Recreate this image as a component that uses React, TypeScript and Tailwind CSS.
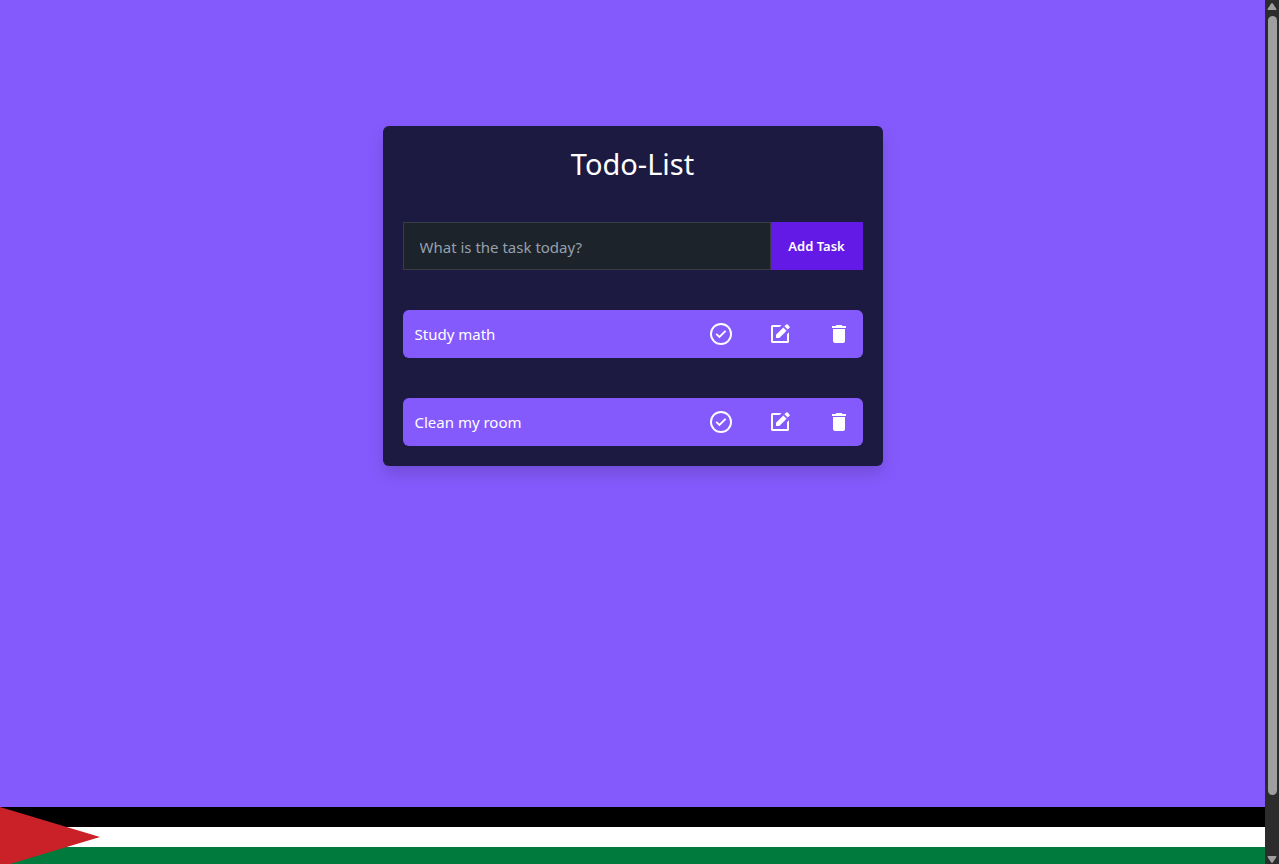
import { useState } from "react";
import type { FormEvent } from "react";
import { MdDelete } from "react-icons/md";

type Task = { id: number; title: string; done: boolean };

const initialTasks: Task[] = [
  { id: 1, title: "Study math", done: false },
  { id: 2, title: "Clean my room", done: false },
];

function CheckIcon() {
  return (
    <svg width="24" height="24" viewBox="0 0 24 24" fill="none" stroke="currentColor" strokeWidth="1.9" aria-hidden="true">
      <circle cx="12" cy="12" r="10.05" />
      <path d="M7.2 11.9L10.4 15L16.6 8.8" />
    </svg>
  );
}

function EditIcon() {
  return (
    <svg width="24" height="24" viewBox="0 0 24 24" fill="currentColor" aria-hidden="true">
      <path d="M13.6 3L11.6 5H5V19H19V12.3L21 10.3V19.5Q21 21 19.5 21H4.5Q3 21 3 19.5V4.5Q3 3 4.5 3Z" />
      <path d="M8 12.7L15.3 5.4L18.6 8.7L11.3 16H8Z" />
      <path d="M16.4 4.3L18.2 2.5Q18.9 1.8 19.6 2.5L21.5 4.4Q22.2 5.1 21.5 5.8L19.7 7.6Z" />
    </svg>
  );
}

function TaskRow({ task, onToggle, onEdit, onDelete }: { task: Task; onToggle: () => void; onEdit: () => void; onDelete: () => void }) {
  return (
    <li className="flex h-12 items-center justify-between rounded-md bg-[#855afd] px-3">
      <span className={task.done ? "line-through" : ""}>{task.title}</span>
      <div className="flex w-[142px] shrink-0 justify-between">
        <button type="button" aria-label="Complete task" onClick={onToggle}>
          <CheckIcon />
        </button>
        <button type="button" aria-label="Edit task" onClick={onEdit}>
          <EditIcon />
        </button>
        <button type="button" aria-label="Delete task" onClick={onDelete}>
          <MdDelete size={24} />
        </button>
      </div>
    </li>
  );
}

function Scrollbar() {
  return (
    <div aria-hidden="true" className="flex w-3.5 shrink-0 flex-col items-center bg-[#2c2c2c] pt-[3px] pb-px">
      <svg width="10" height="8" viewBox="0 0 10 8" fill="#9f9f9f">
        <path d="M4 .7Q5-.6 6 .7L9.4 6Q9.8 7 8.8 7H1.2Q.2 7 .6 6Z" />
      </svg>
      <div className="mt-[5px] mb-[60px] w-[9px] flex-1 rounded-full bg-[#9f9f9f]" />
      <svg width="10" height="8" viewBox="0 0 10 8" fill="#9f9f9f">
        <path d="M4 7.3Q5 8.6 6 7.3L9.4 2Q9.8 1 8.8 1H1.2Q.2 1 .6 2Z" />
      </svg>
    </div>
  );
}

function FlagFooter() {
  return (
    <footer className="h-[57px] shrink-0 overflow-hidden">
      <div className="relative">
        <div className="h-5 bg-black" />
        <div className="h-5 bg-white" />
        <div className="h-5 bg-[#007a3d]" />
        <svg className="absolute top-0 left-0" width="100" height="60" viewBox="0 0 100 60" aria-hidden="true">
          <path d="M0 0L100 30L0 60Z" fill="#ca2027" />
        </svg>
      </div>
    </footer>
  );
}

export default function App() {
  const [tasks, setTasks] = useState<Task[]>(initialTasks);
  const [draft, setDraft] = useState("");

  const addTask = (event: FormEvent) => {
    event.preventDefault();
    if (!draft.trim()) return;
    setTasks([...tasks, { id: Date.now(), title: draft.trim(), done: false }]);
    setDraft("");
  };

  const removeTask = (id: number) => setTasks(tasks.filter((t) => t.id !== id));

  return (
    <div className="flex h-screen bg-[#855afd] font-['Noto_Sans',sans-serif] text-[15px] text-white">
      <div className="flex min-w-0 flex-1 flex-col">
        <main className="flex flex-1 flex-col items-center px-4 pt-[126px]">
          <section className="flex w-full max-w-[500px] flex-col gap-10 rounded-md bg-[#1c1a40] p-5 shadow-[0_8px_16px_rgba(0,0,0,0.15)]">
            <h1 className="text-center text-[29px] leading-9">Todo-List</h1>
            <form onSubmit={addTask} className="flex h-12">
              <input
                type="text"
                aria-label="New task"
                placeholder="What is the task today?"
                value={draft}
                onChange={(e) => setDraft(e.target.value)}
                className="min-w-0 flex-1 border border-[#373d43] bg-[#1d232a] px-4 pt-0.5 outline-none placeholder:text-[#95a0ad]"
              />
              <button type="submit" className="w-[92px] shrink-0 bg-[#641ae6] pt-0.5 text-[13px] font-semibold">
                Add Task
              </button>
            </form>
            <ul className="flex flex-col gap-10">
              {tasks.map((task) => (
                <TaskRow
                  key={task.id}
                  task={task}
                  onToggle={() => setTasks(tasks.map((t) => (t.id === task.id ? { ...t, done: !t.done } : t)))}
                  onEdit={() => {
                    setDraft(task.title);
                    removeTask(task.id);
                  }}
                  onDelete={() => removeTask(task.id)}
                />
              ))}
            </ul>
          </section>
        </main>
        <FlagFooter />
      </div>
      <Scrollbar />
    </div>
  );
}
